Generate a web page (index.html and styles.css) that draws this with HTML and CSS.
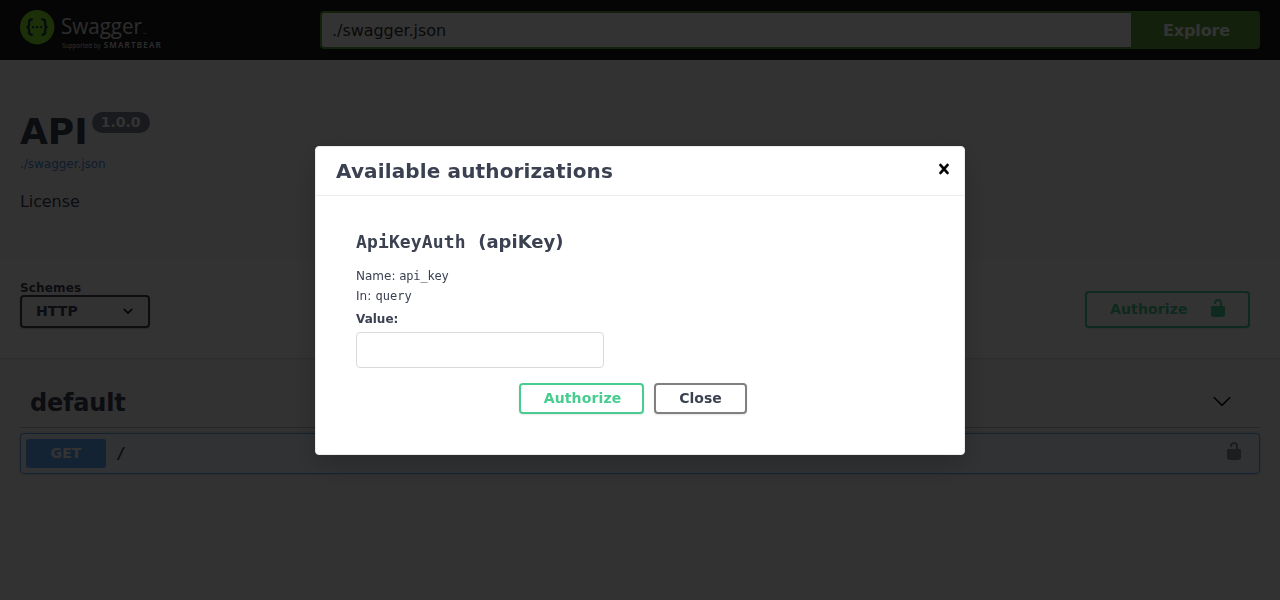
FILE: index.html
```html
<!DOCTYPE html>
<html lang="en">
<head>
<meta charset="utf-8">
<title>Swagger UI</title>
<link rel="stylesheet" href="styles.css">
</head>
<body>
<header class="topbar">
  <a class="logo">
    <svg width="142" height="42" viewBox="0 0 142 42">
      <circle cx="17.200" cy="17.200" r="17.200" fill="#85ea2d"/>
      <g fill="none" stroke="#173647" stroke-width="2.200" stroke-linecap="round" stroke-linejoin="round">
        <path d="M11.800 9.400c-2.400 0-2.800.8-2.800 2.700v2c0 1.800-.4 2.800-1.600 3 1.200.2 1.600 1.200 1.600 3v2c0 1.900.4 2.700 2.800 2.700"/>
        <path d="M22.400 9.400c2.400 0 2.800.8 2.800 2.700v2c0 1.800.4 2.800 1.600 3-1.200.2-1.600 1.200-1.600 3v2c0 1.900-.4 2.700-2.800 2.700"/>
      </g>
      <g fill="#173647"><circle cx="13" cy="17.100" r="1.200"/><circle cx="17.100" cy="17.100" r="1.200"/><circle cx="21.200" cy="17.100" r="1.200"/></g>
      <text class="logo-name" x="41" y="24.300" textLength="81" lengthAdjust="spacingAndGlyphs">Swagger</text>
      <rect x="123.500" y="23" width="2.500" height="1" fill="#fff" opacity=".5"/>
      <text class="logo-by" x="42" y="38" textLength="38.500" lengthAdjust="spacingAndGlyphs">Supported by</text>
      <text class="logo-brand" x="83.700" y="38" textLength="57" lengthAdjust="spacing">SMARTBEAR</text>
    </svg>
  </a>
  <form class="url-form">
    <input class="url-input" type="text" value="./swagger.json">
    <button class="explore" type="button">Explore</button>
  </form>
</header>

<section class="info">
  <h1 class="title">API<span class="version">1.0.0</span></h1>
  <a class="spec-url">./swagger.json</a>
  <div class="license">License</div>
</section>

<section class="schemes">
  <div class="scheme-field">
    <span class="scheme-label">Schemes</span>
    <div class="select">HTTP
      <svg width="20" height="20" viewBox="0 0 20 20"><path d="M13.418 7.859c.271-.268.709-.268.978 0 .27.268.272.701 0 .969l-3.908 3.830c-.27.268-.707.268-.979 0l-3.908-3.830c-.27-.267-.27-.701 0-.969.271-.268.709-.268.978 0L10 11l3.418-3.141z"/></svg>
    </div>
  </div>
  <button class="btn authorize wide" type="button"><span>Authorize</span>
    <svg width="20" height="20" viewBox="0 0 20 20"><path d="M15.800 8H14V5.600C14 2.703 12.665 1 10 1 7.334 1 6 2.703 6 5.600V6h2v-.801C8 3.754 8.797 3 10 3c1.203 0 2 .754 2 2.199V8H4c-.553 0-1 .646-1 1.199V17c0 .549.428 1.139.951 1.307l1.197.387C5.672 18.861 6.550 19 7.100 19h5.800c.549 0 1.428-.139 1.951-.307l1.196-.387c.524-.167.953-.757.953-1.306V9.199C17 8.646 16.352 8 15.800 8z"/></svg>
  </button>
</section>

<main class="operations">
  <h2 class="tag"><span>default</span>
    <svg width="20" height="20" viewBox="0 0 20 20"><path d="M17.418 6.109c.272-.268.709-.268.979 0s.271.701 0 .969l-7.908 7.830c-.27.268-.707.268-.979 0l-7.908-7.830c-.27-.268-.27-.701 0-.969s.709-.268.979 0L10 13.250l7.418-7.141z"/></svg>
  </h2>
  <div class="operation">
    <span class="method">GET</span>
    <span class="path">/</span>
    <svg class="lock" width="20" height="20" viewBox="0 0 20 20"><path d="M15.800 8H14V5.600C14 2.703 12.665 1 10 1 7.334 1 6 2.703 6 5.600V6h2v-.801C8 3.754 8.797 3 10 3c1.203 0 2 .754 2 2.199V8H4c-.553 0-1 .646-1 1.199V17c0 .549.428 1.139.951 1.307l1.197.387C5.672 18.861 6.550 19 7.100 19h5.800c.549 0 1.428-.139 1.951-.307l1.196-.387c.524-.167.953-.757.953-1.306V9.199C17 8.646 16.352 8 15.800 8z"/></svg>
  </div>
</main>

<div class="backdrop"></div>
<div class="modal" role="dialog">
  <div class="modal-header">
    <h3 class="modal-title">Available authorizations</h3>
    <svg width="20" height="20" viewBox="0 0 20 20"><path stroke="#000" stroke-width=".4" d="M14.348 14.849c-.469.469-1.229.469-1.697 0L10 11.819l-2.651 3.029c-.469.469-1.229.469-1.697 0-.469-.469-.469-1.229 0-1.697l2.758-3.150-2.759-3.152c-.469-.469-.469-1.228 0-1.697.469-.469 1.228-.469 1.697 0L10 8.183l2.651-3.031c.469-.469 1.228-.469 1.697 0 .469.469.469 1.229 0 1.697l-2.758 3.152 2.758 3.150c.469.469.469 1.229 0 1.698z"/></svg>
  </div>
  <div class="modal-body">
    <h4 class="scheme-title"><code>ApiKeyAuth</code>&nbsp; (apiKey)</h4>
    <p class="detail">Name: <code class="name">api_key</code></p>
    <p class="detail">In: <code class="place">query</code></p>
    <label class="value-label" for="key">Value:</label>
    <input class="value-input" id="key" type="text">
    <div class="actions">
      <button class="btn authorize" type="button">Authorize</button>
      <button class="btn close" type="button">Close</button>
    </div>
  </div>
</div>
</body>
</html>
```
FILE: styles.css
```css
* { box-sizing: border-box; }
body {
  margin: 0;
  height: 600px;
  overflow: hidden;
  background: #fafafa;
  color: #3b4151;
  font-family: "DejaVu Sans", sans-serif;
}
h1, h2, h3, h4, p { margin: 0; }
svg { display: block; flex: none; }
code { font-family: "DejaVu Sans Mono", monospace; }

.topbar {
  display: flex;
  align-items: flex-start;
  height: 60px;
  padding: 10px 20px;
  background: #1b1b1b;
}
.logo { width: 300px; }
.logo text { fill: #fff; font-family: "Open Sans", sans-serif; font-stretch: 100%; }
.logo .logo-name { font-size: 22.5px; font-weight: 400; opacity: .85; }
.logo .logo-by { font-size: 6.5px; opacity: .85; }
.logo .logo-brand { font-family: "Noto Sans", sans-serif; font-size: 8px; font-weight: 600; opacity: .85; }
.url-form { display: flex; flex: 1; height: 39px; padding-top: 1px; }
.url-input {
  flex: 1;
  min-width: 0;
  padding: 0 10px;
  border: 2px solid #62a03f;
  border-right: 0;
  border-radius: 4px 0 0 4px;
  background: #fff;
  color: #333;
  font: 16px "DejaVu Sans", sans-serif;
  letter-spacing: -.05px;
}
.explore {
  width: 129px;
  padding: 0 0 0 2px;
  border: 0;
  border-radius: 0 4px 4px 0;
  background: #62a03f;
  color: #fff;
  font: bold 16px "DejaVu Sans", sans-serif;
  letter-spacing: -.1px;
}

.info { height: 200px; padding: 51px 20px 0; }
.title { display: flex; align-items: flex-start; font-size: 36px; line-height: 42px; }
.version {
  height: 21px;
  margin: 1px 0 0 4px;
  padding: 0 9px;
  border-radius: 11px;
  background: #7d8492;
  color: #fff;
  font-size: 14px;
  line-height: 21px;
}
.spec-url { display: block; margin-top: 4px; color: #4990e2; font-size: 12px; line-height: 15px; letter-spacing: -.03px; }
.license { margin-top: 20px; font-size: 16px; line-height: 19px; letter-spacing: -.1px; }

.schemes {
  display: flex;
  align-items: flex-start;
  justify-content: space-between;
  height: 98px;
  padding: 21px 30px 0 20px;
  background: #fff;
  box-shadow: 0 1px 2px rgba(0, 0, 0, .15);
}
.scheme-label { display: block; font-size: 12px; font-weight: bold; line-height: 14px; letter-spacing: .15px; }
.select {
  display: flex;
  align-items: center;
  justify-content: space-between;
  width: 130px;
  height: 33px;
  padding: 0 10px 1px 14px;
  border: 2px solid #41444e;
  border-radius: 4px;
  background: #f7f7f7;
  box-shadow: 0 1px 2px rgba(0, 0, 0, .25);
  font-size: 14px;
  font-weight: bold;
  letter-spacing: .1px;
}
.btn {
  height: 31px;
  padding: 0 0 1px;
  border: 2px solid #808080;
  border-radius: 4px;
  background: transparent;
  box-shadow: 0 1px 2px rgba(0, 0, 0, .1);
  color: #3b4151;
  font: bold 14px "DejaVu Sans", sans-serif;
}
.btn.close { width: 93px; }
.btn.authorize {
  width: 125px;
  padding-left: 2px;
  border-color: #49cc90;
  color: #49cc90;
  fill: #49cc90;
  letter-spacing: .13px;
}
.btn.wide {
  display: flex;
  align-items: center;
  justify-content: space-between;
  width: 165px;
  height: 37px;
  margin-top: 10px;
  padding: 0 20px 1px 23px;
}
.btn.wide svg { margin-bottom: 2px; }

.operations { padding: 20px; }
.tag {
  display: flex;
  align-items: center;
  justify-content: space-between;
  height: 50px;
  padding: 0 28px 3px 10px;
  border-bottom: 1px solid rgba(59, 65, 81, .3);
  font-size: 24px;
  letter-spacing: -.2px;
}
.tag span { padding-top: 4px; }
.operation {
  display: flex;
  align-items: center;
  height: 41px;
  margin-top: 5px;
  padding: 0 15px 0 5px;
  border: 1px solid #61affe;
  border-radius: 4px;
  background: #eff7ff;
  box-shadow: 0 0 3px rgba(0, 0, 0, .19);
}
.method {
  width: 80px;
  height: 29px;
  border-radius: 3px;
  background: #61affe;
  color: #fff;
  font-size: 14px;
  font-weight: bold;
  line-height: 28px;
  text-align: center;
  letter-spacing: .1px;
}
.path { flex: 1; padding-left: 10px; font: 600 16px "DejaVu Sans Mono", monospace; }
.lock { margin-bottom: 5px; opacity: .4; }

.backdrop { position: fixed; inset: 0; background: rgba(0, 0, 0, .8); }
.modal {
  position: fixed;
  top: 146px;
  left: 315px;
  width: 650px;
  height: 309px;
  border: 1px solid #ebebeb;
  border-radius: 4px;
  background: #fff;
  box-shadow: 0 10px 30px rgba(0, 0, 0, .2);
}
.modal-header {
  display: flex;
  align-items: center;
  justify-content: space-between;
  height: 49px;
  padding: 0 10px 4px 20px;
  border-bottom: 1px solid #ebebeb;
}
.modal-title { padding-top: 4px; font-size: 20px; letter-spacing: .14px; }
.modal-body { padding: 35px 40px 0; }
.scheme-title { margin-bottom: 14px; font-size: 18px; line-height: 21px; }
.scheme-title code { letter-spacing: .13px; }
.detail { font-size: 12px; line-height: 20px; }
.detail .name { letter-spacing: -.18px; }
.detail .place { margin-left: .5px; }
.value-label { display: block; margin: 6px 0; font-size: 12px; font-weight: bold; line-height: 14px; }
.value-input {
  display: block;
  width: 248px;
  height: 36px;
  border: 1px solid #d9d9d9;
  border-radius: 4px;
  background: #fff;
}
.actions { display: flex; justify-content: center; gap: 10px; margin-top: 15px; padding-right: 14px; }
```
